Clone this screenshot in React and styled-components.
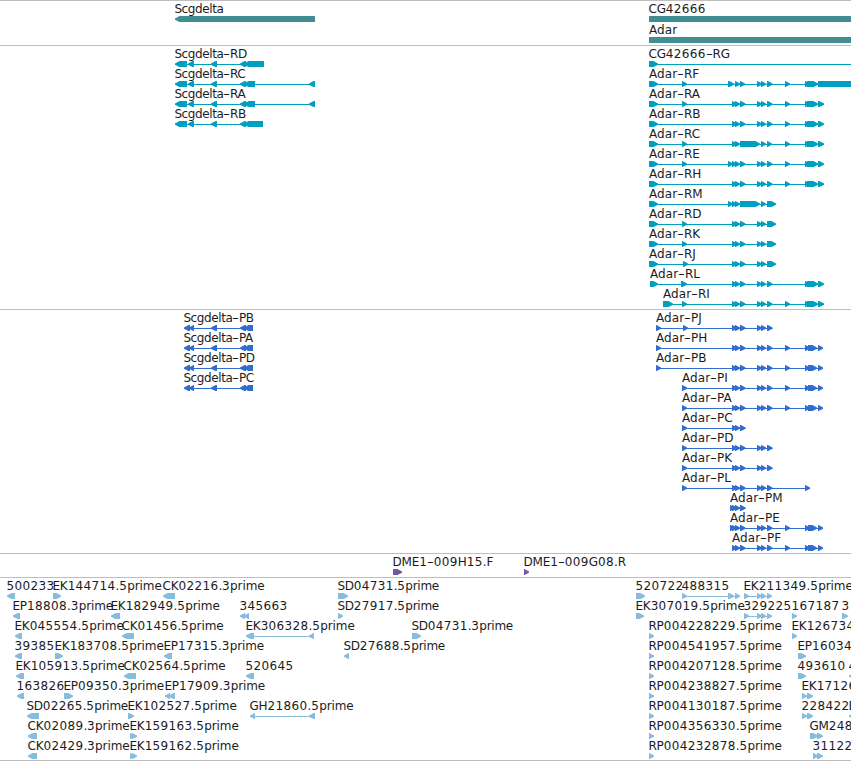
import styled, { createGlobalStyle } from "styled-components";

const teal = "#408e91";
const cyan = "#009ebf";
const blue = "#316ccf";
const purple = "#7158a8";
const sky = "#87bcde";

const VIEW_WIDTH = 851;
const TIP = 5;

const GlobalStyle = createGlobalStyle`
    body {
        margin: 0;
        background: #fff;
        overflow: hidden;
    }
`;

const Browser = styled.main`
    width: ${VIEW_WIDTH}px;
    height: 761px;
    box-sizing: border-box;
    overflow: hidden;
    border-top: 1px solid #bebebe;
    font-family: "DejaVu Sans", sans-serif;
    font-size: 12px;
`;
const Track = styled.section`
    display: flex;
    flex-direction: column;
    gap: ${props => props.$gap || 0}px;
    padding: 1px 0 ${props => (props.$tight ? 1 : 2)}px;
    border-bottom: 1px solid #bebebe;
    color: ${props => props.$color};
`;
/* one column per pixel of the visible region */
const Row = styled.div`
    display: grid;
    grid-template-columns: repeat(${VIEW_WIDTH}, 1px);
    height: 20px;
`;
const FeatureBox = styled.div`
    grid-row: 1;
    display: flex;
    flex-direction: column;
    width: max-content;
`;
const Label = styled.span`
    height: 14px;
    margin-left: ${props => props.$shift}px;
    line-height: 14px;
    color: #1c1c1c;
    white-space: nowrap;
    letter-spacing: ${props => props.$spacing}px;
`;
const Digits = styled.span`
    letter-spacing: 0.36px;
`;
const Dash = styled.span`
    display: inline-block;
    width: 6.6px;
    letter-spacing: 0;
    transform: scaleX(1.6);
    transform-origin: 0 50%;
`;
const Glyph = styled.svg`
    display: block;
    height: 6px;
    overflow: visible;
    fill: currentColor;
`;

const exonPoints = (a, b, left) => {
    const tip = Math.min(TIP, b - a);
    // d is how far back from the tip a point lies
    const at = d => (left ? a + d : b - d);
    const base = left ? b : a;
    return [
        [base, 0],
        [at(tip - 0.4), 0],
        [at(0), 2.6],
        [at(0), 3.8],
        [at(tip - 0.6), 6],
        [base, 6],
    ].join(" ");
};

const labelSpacing = name => {
    if (name.startsWith("Scg")) return -0.4;
    if (name.startsWith("Adar")) return 0.1;
    if (name.startsWith("SD")) return -0.26;
    return -0.12;
};

const Feature = ({ name, x, exons, left, block }) => {
    const end = Math.max(...exons.map(e => e[1]));
    const start = exons[0][0];
    return (
        <FeatureBox style={{ gridColumnStart: x + 1 }}>
            <Label $spacing={labelSpacing(name)} $shift={name.startsWith("Adar") ? 0 : -0.6}>
                {name.split(/(\d+|-)/).map((part, i) => {
                    if (part === "-") return <Dash key={i}>-</Dash>;
                    return i % 2 ? <Digits key={i}>{part}</Digits> : part;
                })}
            </Label>
            <Glyph width={end - x} viewBox={`${x} 0 ${end - x} 6`}>
                {exons.length > 1 && <rect x={start} y="3" width={end - start} height="1" />}
                {exons.map(([a, b, flat]) => (
                    block || flat
                        ? <rect key={a} x={a} y="0" width={b - a} height="6" />
                        : <polygon key={a} points={exonPoints(a, b, left)} />
                ))}
            </Glyph>
        </FeatureBox>
    );
};

const f = (name, x, ...exons) => ({ name, x, exons });
const r = (name, x, ...exons) => ({ name, x, exons, left: true });

// exon groups shared between the Adar isoforms
const first = [649, 658];
const second = [682, 687];
const trio = [[732, 737], [735, 740], [740, 745.5]];
const trioLong = [[732, 737], [735, 740], [740, 760]];
const mid = [[757, 762], [761, 766], [767, 772.5]];
const midLong = [[757, 762], [761, 766], [767, 776]];
const far = [785, 790];
const tail = [[805, 810], [807, 818], [818, 824]];
const cdsTail = [[805, 810], [808, 817], [818, 823]];

const scgHead = [[175, 187], [188, 194], [211, 217], [240, 246]];
const scgCds = [[184, 190], [189, 194], [211, 217], [240, 246], [244, 253]];
const adarCds = [...trio, ...mid, far, ...cdsTail];

const genes = [
    [r("Scgdelta", 175, [175, 315]), { ...f("CG42666", 649, [649, 851]), block: true }],
    [{ ...f("Adar", 649, [649, 851]), block: true }],
];

const transcripts = [
    [r("Scgdelta-RD", 175, ...scgHead, [244, 264]), f("CG42666-RG", 649, first, [851, 856])],
    [
        r("Scgdelta-RC", 175, ...scgHead, [244, 255], [309, 315]),
        f("Adar-RF", 649, first, second, [728, 734], [735, 740], [740, 745], ...mid, far, [805, 810], [807, 818], [818, 851, true]),
    ],
    [
        r("Scgdelta-RA", 175, ...scgHead, [244, 255], [309, 315]),
        f("Adar-RA", 649, first, second, ...trio, ...mid, far, ...tail),
    ],
    [r("Scgdelta-RB", 175, ...scgHead, [244, 263]), f("Adar-RB", 649, first, ...trio, ...mid, far, ...tail)],
    [f("Adar-RC", 649, first, second, ...trioLong, [761, 766], [767, 772], far, ...tail)],
    [f("Adar-RE", 649, first, second, [728, 733], ...trio, ...mid, far, ...tail)],
    [f("Adar-RH", 649, first, ...trio, ...mid, far, ...tail)],
    [f("Adar-RM", 649, first, [728, 733], ...trioLong, [761, 766], [767, 776])],
    [f("Adar-RD", 649, first, second, ...trio, ...midLong)],
    [f("Adar-RK", 649, first, second, ...trio, ...midLong)],
    [f("Adar-RJ", 649, first, [683, 688], ...trio, ...midLong)],
    [f("Adar-RL", 650, [650, 658], [681, 687], ...trio, ...mid, ...tail)],
    [f("Adar-RI", 663, [663, 673], second, ...trio, ...mid, far, ...tail)],
];

const proteins = [
    [r("Scgdelta-PB", 184, ...scgCds), f("Adar-PJ", 656, [656, 661], [683, 688], ...trio, ...mid)],
    [r("Scgdelta-PA", 184, ...scgCds), f("Adar-PH", 656, [656, 661], ...adarCds)],
    [r("Scgdelta-PD", 184, ...scgCds), f("Adar-PB", 656, [656, 661], ...adarCds)],
    [r("Scgdelta-PC", 184, ...scgCds), f("Adar-PI", 682, second, ...adarCds)],
    [f("Adar-PA", 682, second, ...adarCds)],
    [f("Adar-PC", 682, second, ...trio)],
    [f("Adar-PD", 682, second, ...trio, ...mid)],
    [f("Adar-PK", 682, second, ...trio, ...mid)],
    [f("Adar-PL", 682, second, ...trio, ...mid, [805, 810])],
    [f("Adar-PM", 730, [730, 735], ...trio)],
    [f("Adar-PE", 730, [730, 735], ...adarCds)],
    [f("Adar-PF", 732, ...adarCds)],
];

const clones = [
    [f("DME1-009H15.F", 393, [393, 402]), f("DME1-009G08.R", 524, [524, 529])],
];

const ests = [
    [
        r("500233", 7, [7, 15]),
        f("EK144714.5prime", 53, [53, 61]),
        r("CK02216.3prime", 163, [163, 175]),
        f("SD04731.5prime", 338, [338, 348]),
        f("520722", 636, [636, 645]),
        f("488315", 682, [682, 687], [728, 734], [735, 740]),
        f("EK211349.5prime", 744, [744, 749], [757, 762], [761, 766], [767, 772]),
    ],
    [
        r("EP18808.3prime", 13, [13, 20]),
        r("EK182949.5prime", 111, [111, 120]),
        r("345663", 240, [240, 245], [244, 249]),
        f("SD27917.5prime", 338, [338, 343]),
        f("EK307019.5prime", 636, [636, 644]),
        f("329225", 744, [744, 749], [757, 762], [761, 766], [767, 772]),
        f("167187", 792, [792, 797]),
        f("3", 842, [842, 848]),
    ],
    [
        r("EK045554.5prime", 15, [15, 22]),
        r("CK01456.5prime", 122, [122, 134]),
        r("EK306328.5prime", 246, [246, 254], [309, 314]),
        f("SD04731.3prime", 412, [412, 421]),
        f("RP004228229.5prime", 649, [649, 654]),
        f("EK126734.5prime", 792, [792, 797]),
    ],
    [
        r("39385", 15, [15, 22]),
        f("EK183708.5prime", 55, [55, 63]),
        r("EP17315.3prime", 164, [164, 172]),
        r("SD27688.5prime", 344, [344, 349]),
        f("RP004541957.5prime", 649, [649, 654]),
        f("EP16034.5prime", 798, [798, 806]),
    ],
    [
        r("EK105913.5prime", 16, [16, 24]),
        r("CK02564.5prime", 124, [124, 136]),
        r("520645", 246, [246, 254]),
        f("RP004207128.5prime", 649, [649, 654]),
        f("493610", 798, [798, 806]),
        r("4", 849, [849, 857]),
    ],
    [
        r("163826", 17, [17, 24]),
        f("EP09350.3prime", 64, [64, 73]),
        r("EP17909.3prime", 165, [165, 170], [169, 175]),
        f("RP004238827.5prime", 649, [649, 654]),
        f("EK17126.5prime", 802, [802, 807], [807, 813]),
    ],
    [
        r("SD02265.5prime", 27, [27, 39]),
        f("EK102527.5prime", 128, [128, 134]),
        r("GH21860.5prime", 250, [250, 255], [309, 315]),
        f("RP004130187.5prime", 649, [649, 654]),
        f("228422", 802, [802, 807], [807, 813]),
        r("E", 849, [849, 857]),
    ],
    [
        r("CK02089.3prime", 28, [28, 37]),
        f("EK159163.5prime", 130, [130, 135], [132, 137]),
        f("RP004356330.5prime", 649, [649, 654]),
        f("GM248", 810, [810, 818], [817, 823]),
    ],
    [
        r("CK02429.3prime", 28, [28, 37]),
        f("EK159162.5prime", 130, [130, 135], [132, 137]),
        f("RP004232878.5prime", 649, [649, 654]),
        f("31122", 813, [813, 818], [817, 823]),
    ],
];

const FeatureTrack = ({ rows, ...rest }) => (
    <Track {...rest}>
        {rows.map((row, i) => (
            <Row key={i}>
                {row.map(item => <Feature key={item.name} {...item} />)}
            </Row>
        ))}
    </Track>
);

const App = () => (
    <>
        <GlobalStyle />
        <Browser>
            <FeatureTrack rows={genes} $color={teal} $gap={1} />
            <FeatureTrack rows={transcripts} $color={cyan} />
            <FeatureTrack rows={proteins} $color={blue} />
            <FeatureTrack rows={clones} $color={purple} />
            <FeatureTrack rows={ests} $color={sky} $tight />
        </Browser>
    </>
);

export default App;
